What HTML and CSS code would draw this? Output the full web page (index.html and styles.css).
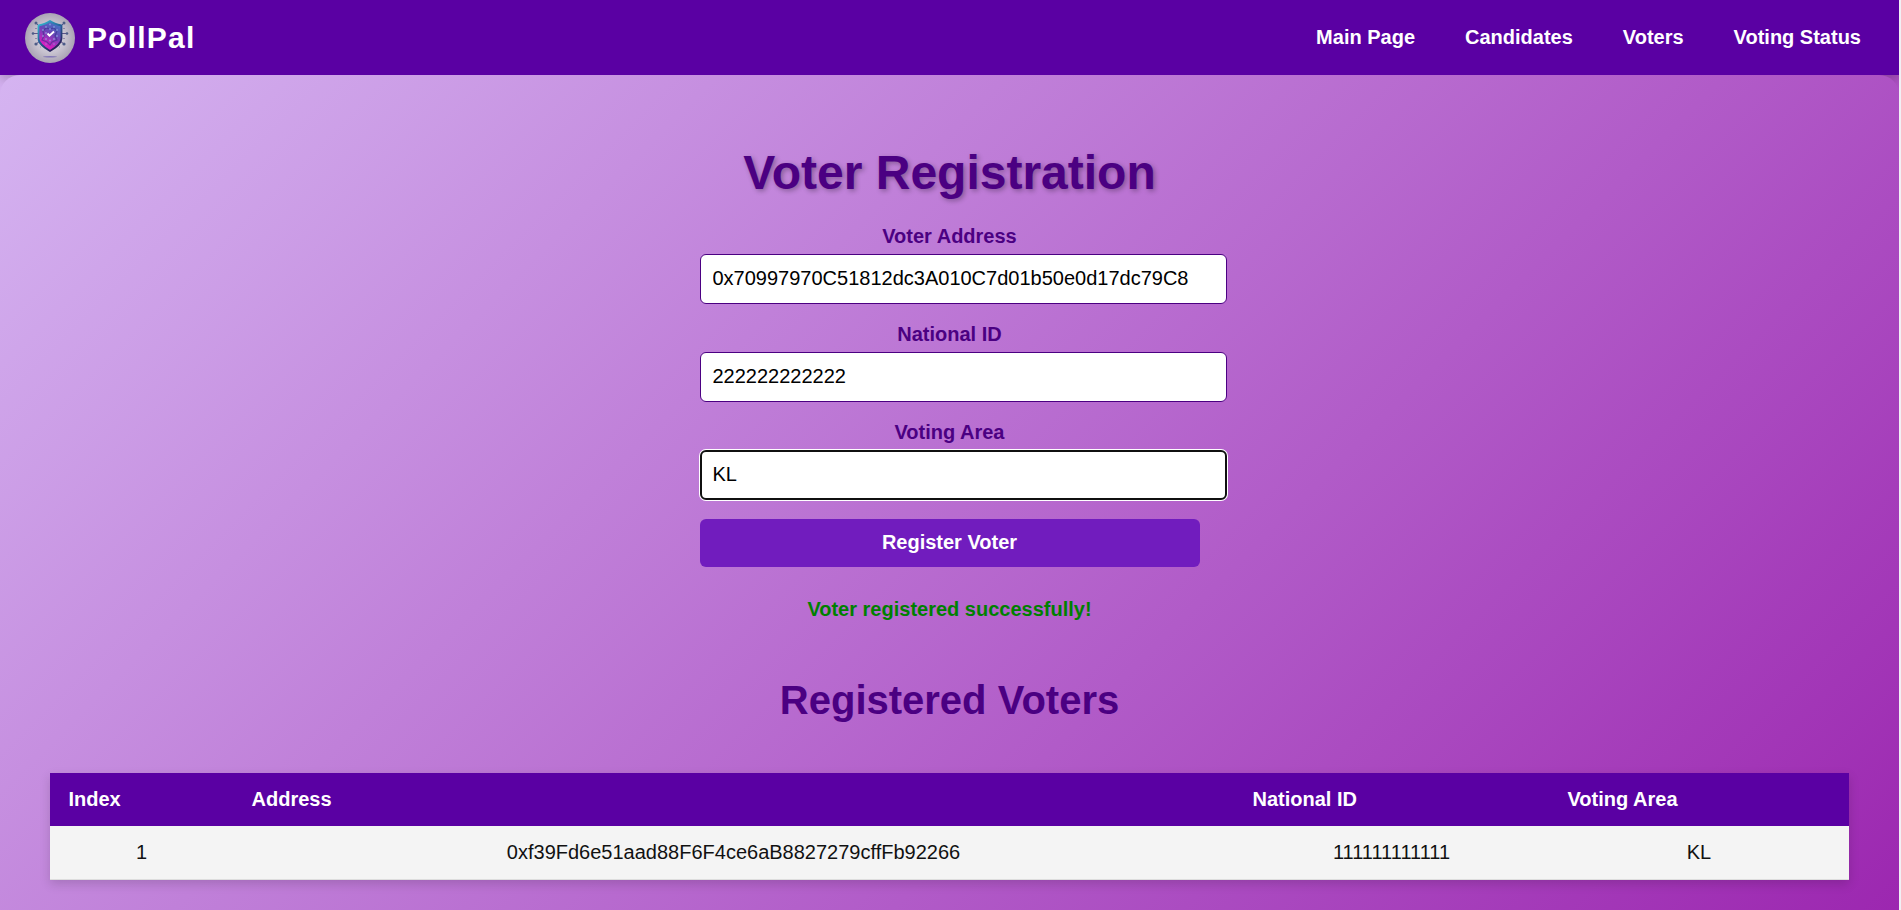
FILE: index.html
```html
<!DOCTYPE html>
<html lang="en">
<head>
<meta charset="utf-8">
<title>PollPal</title>
<link rel="stylesheet" href="styles.css">
</head>
<body>
<header class="header">
  <div class="brand">
    <svg class="logo" viewBox="0 0 50 50" aria-hidden="true">
      <defs>
        <radialGradient id="disc"><stop offset="0" stop-color="#e4e0ea"/><stop offset=".6" stop-color="#c8c3d0"/><stop offset="1" stop-color="#aaa3b4"/></radialGradient>
        <linearGradient id="edge" x1="0" y1="0" x2=".6" y2="1"><stop offset="0" stop-color="#35c3d8"/><stop offset=".5" stop-color="#25649c"/><stop offset="1" stop-color="#2a1d5a"/></linearGradient>
        <linearGradient id="fill" x1=".7" y1="0" x2=".25" y2="1"><stop offset="0" stop-color="#3f78c4"/><stop offset=".4" stop-color="#6a45b8"/><stop offset=".8" stop-color="#d41fc0"/></linearGradient>
      </defs>
      <circle cx="25" cy="25" r="25" fill="url(#disc)"/>
      <g fill="none" stroke="#5d5487" stroke-width="1">
        <path d="M11 10l4 4M39 10l-4 4M8 20.500h6M42 20.500h-6M11 31l4-3M39 31l-4-3"/>
      </g>
      <g fill="#4d5c88">
        <circle cx="11" cy="10" r="1.500"/><circle cx="39" cy="10" r="1.500"/><circle cx="8" cy="20.500" r="1.300"/><circle cx="42" cy="20.500" r="1.300"/><circle cx="11" cy="31" r="1.600"/><circle cx="39" cy="31" r="1.600"/>
      </g>
      <path d="M10 15.500h2M38 15.500h2M10 25.500h2M38 25.500h2M15 34h1M34 34h1" stroke="#8579a0" stroke-width=".8"/>
      <path d="M25 8c3.500 2.600 7 3.600 11.500 4.500v13c0 5-5 8.500-11.500 12.500-6.500-4-11.500-7.500-11.500-12.500v-13c4.500-.9 8-1.900 11.500-4.500z" fill="url(#fill)" stroke="url(#edge)" stroke-width="1.800"/>
      <path d="M18 18l3-3 4 1 4-1 3 3-2 5 2 4-5 2-2 3-3-3-5-2 2-4z" fill="none" stroke="#2d3187" stroke-width="1.200" opacity=".55"/>
      <g fill="#93b6ea" opacity=".6">
        <circle cx="25" cy="11.500" r="1"/><circle cx="21" cy="14" r="1"/><circle cx="29" cy="14" r="1"/><circle cx="18" cy="17" r="1"/><circle cx="25" cy="16" r="1"/><circle cx="32" cy="17" r="1"/><circle cx="21" cy="20" r="1"/><circle cx="18" cy="23" r="1"/><circle cx="32" cy="23" r="1"/><circle cx="21" cy="26" r="1"/><circle cx="29" cy="26" r="1"/><circle cx="25" cy="27.500" r="1"/><circle cx="21" cy="31" r=".8"/><circle cx="29" cy="31" r=".8"/>
      </g>
      <path d="M22.500 20.500l2 2.200 4.500-4.200" fill="none" stroke="#fff" stroke-width="1.900"/>
      <ellipse cx="25" cy="43.700" rx="7" ry=".7" fill="#6a5db0" opacity=".7"/>
    </svg>
    <span class="brand-name">PollPal</span>
  </div>
  <nav class="nav">
    <a>Main Page</a><a>Candidates</a><a>Voters</a><a>Voting Status</a>
  </nav>
</header>
<main class="container">
  <h1 class="title">Voter Registration</h1>
  <form class="form">
    <label class="label" for="address">Voter Address</label>
    <input class="input" id="address" value="0x70997970C51812dc3A010C7d01b50e0d17dc79C8">
    <label class="label" for="nid">National ID</label>
    <input class="input" id="nid" value="222222222222">
    <label class="label" for="area">Voting Area</label>
    <input class="input input-active" id="area" value="KL">
    <button class="button" type="button">Register Voter</button>
  </form>
  <p class="message">Voter registered successfully!</p>
  <h2 class="subtitle">Registered Voters</h2>
  <table class="table">
    <colgroup><col class="col-index"><col class="col-address"><col class="col-id"><col></colgroup>
    <thead><tr><th>Index</th><th>Address</th><th>National ID</th><th>Voting Area</th></tr></thead>
    <tbody><tr><td>1</td><td>0xf39Fd6e51aad88F6F4ce6aB8827279cffFb92266</td><td>111111111111</td><td>KL</td></tr></tbody>
  </table>
</main>
</body>
</html>
```
FILE: styles.css
```css
html {
  height: 100%;
  background: #f1f0f5;
}

body {
  width: 1899px;
  margin: 0;
  height: 100%;
  overflow: hidden;
  font-family: "Liberation Sans", Arial, sans-serif;
  font-size: 20px;
  line-height: 23px;
  text-align: center;
  background: linear-gradient(135deg, #d5b4f1, #9c27b0);
}

.header {
  display: flex;
  justify-content: space-between;
  align-items: center;
  box-sizing: border-box;
  height: 75px;
  padding: 0 38px 0 25px;
  color: #fff;
  background: #5a00a3;
  box-shadow: 0 4px 10px rgba(0, 0, 0, 0.2);
}

.brand {
  display: flex;
  align-items: center;
  gap: 12px;
}

.logo {
  width: 50px;
  height: 50px;
}

.brand-name {
  font-size: 30px;
  line-height: 36px;
  font-weight: bold;
  letter-spacing: 1.2px;
}

.nav {
  display: flex;
  gap: 50px;
  font-weight: bold;
}

.container {
  position: relative;
  box-sizing: border-box;
  height: 835px;
  padding: 65px 50px 0;
  border-radius: 20px 20px 0 0;
  background: linear-gradient(135deg, #d5b4f1, #9c27b0);
}

.title {
  margin: 0 0 20px;
  font-size: 48px;
  line-height: 65px;
  color: #4b0082;
  text-shadow: 2px 2px 5px rgba(0, 0, 0, 0.3);
}

.form {
  display: flex;
  flex-direction: column;
  width: 500px;
  margin: 0 auto;
}

.label {
  margin-bottom: 6px;
  font-weight: bold;
  color: #4b0082;
}

.input {
  box-sizing: border-box;
  width: 527px;
  height: 50px;
  margin: 0 0 19px;
  padding: 0 12px 2px;
  border: 1px solid #4b0082;
  border-radius: 6px;
  font: inherit;
  color: #000;
  background: #fff;
}

.input-active {
  border: 2px solid #101010;
  padding: 0 11px 2px;
  box-shadow: 0 0 0 1px #fff;
}

.button {
  height: 48px;
  padding: 0 0 2px;
  border: 0;
  border-radius: 6px;
  font: inherit;
  font-weight: bold;
  color: #fff;
  background: #711cbe;
}

.message {
  margin: 31px 0 0;
  font-weight: bold;
  color: #008000;
}

.subtitle {
  margin: 56px 0 50px;
  font-size: 40px;
  line-height: 46px;
  color: #4b0082;
}

.table {
  width: 100%;
  table-layout: fixed;
  border-collapse: collapse;
  box-shadow: 0 4px 10px rgba(0, 0, 0, 0.15);
}

.col-index {
  width: 183px;
}

.col-address {
  width: 1001px;
}

.col-id {
  width: 315px;
}

.table th {
  height: 53px;
  padding: 0 18.5px;
  text-align: left;
  color: #fff;
  background: #5a00a3;
}

.table td {
  height: 53px;
  padding: 0 18px;
  border-bottom: 1px solid #ddd;
  color: #111;
  background: #f4f4f4;
}
```
